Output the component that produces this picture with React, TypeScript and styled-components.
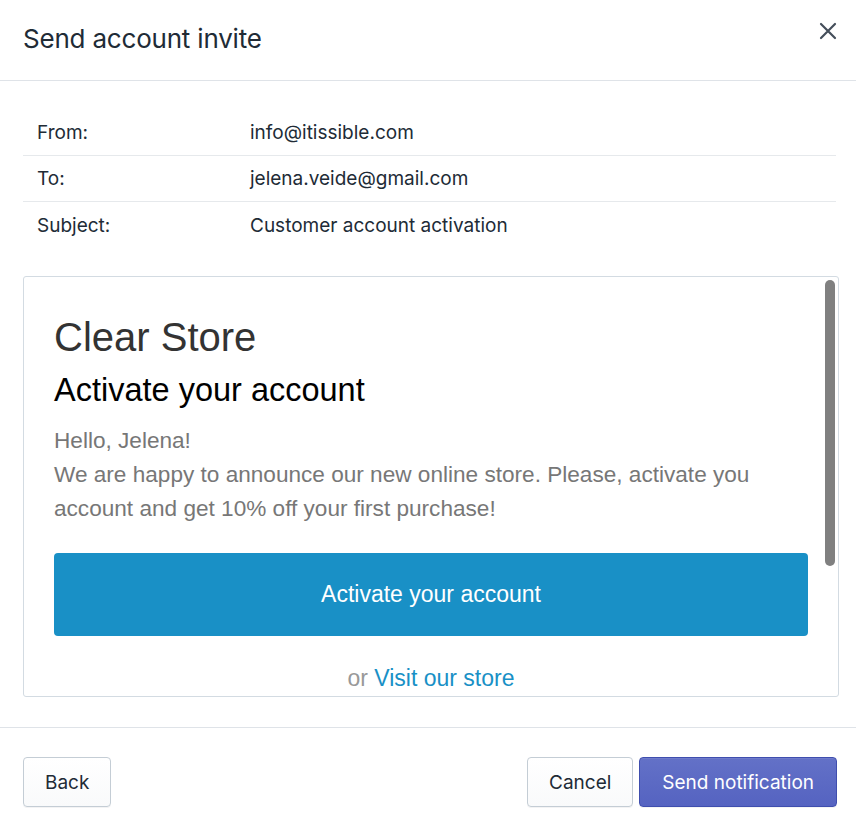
import styled, { createGlobalStyle } from 'styled-components';

const GlobalStyle = createGlobalStyle`
  html, body {
    margin: 0;
    padding: 0;
    background: #ffffff;
  }
  * {
    box-sizing: border-box;
  }
`;

const Modal = styled.div`
  width: 856px;
  height: 828px;
  display: flex;
  flex-direction: column;
  background: #ffffff;
  font-family: Inter, 'Noto Sans', sans-serif;
  color: #212b36;
`;

const Header = styled.header`
  height: 81px;
  flex: none;
  display: flex;
  align-items: center;
  justify-content: space-between;
  padding: 0 16px 4px 23px;
  border-bottom: 1px solid #dfe3e8;
`;

const Title = styled.h2`
  margin: 0;
  font-size: 26px;
  font-weight: 400;
  letter-spacing: -0.2px;
`;

const CloseButton = styled.button`
  width: 24px;
  height: 24px;
  padding: 0;
  border: 0;
  background: none;
  display: flex;
  align-items: center;
  justify-content: center;
  margin-bottom: 14px;
  cursor: pointer;
`;

const Body = styled.div`
  flex: 1;
  display: flex;
  flex-direction: column;
  padding: 29px 17px 30px 23px;
  border-bottom: 1px solid #dfe3e8;
`;

const Fields = styled.div`
  display: flex;
  flex-direction: column;
  margin-right: 3px;
`;

const FieldRow = styled.div<{ $last?: boolean }>`
  height: 46px;
  display: grid;
  grid-template-columns: 213px 1fr;
  align-items: center;
  padding-left: 14px;
  border-bottom: ${(p) => (p.$last ? 'none' : '1px solid #e6e9ec')};
  font-size: 19px;
`;

const FieldLabel = styled.span`
  color: #212b36;
`;

const FieldValue = styled.span`
  color: #212b36;
`;

const Preview = styled.div`
  position: relative;
  margin-top: 28px;
  height: 421px;
  border: 1px solid #d3dbe2;
  border-radius: 3px;
  overflow: hidden;
  font-family: 'Liberation Sans', Arial, sans-serif;
`;

const PreviewContent = styled.div`
  padding: 37px 30px 0 30px;
`;

const StoreName = styled.h1`
  margin: 0;
  font-size: 40px;
  line-height: 46px;
  font-weight: 400;
  color: #333333;
`;

const EmailHeading = styled.h3`
  margin: 10px 0 0;
  font-size: 32.5px;
  line-height: 40px;
  font-weight: 400;
  color: #000000;
`;

const EmailText = styled.p`
  margin: 14px 0 0;
  font-size: 22.6px;
  line-height: 34px;
  color: #777777;
  max-width: 740px;
`;

const ActivateButton = styled.a`
  display: flex;
  align-items: center;
  justify-content: center;
  margin-top: 27px;
  height: 83px;
  border-radius: 4px;
  background: #1990c6;
  color: #ffffff;
  font-size: 23px;
  text-decoration: none;
`;

const AltLine = styled.p`
  margin: 29px 0 0;
  text-align: center;
  font-size: 23px;
  color: #999999;
`;

const StoreLink = styled.a`
  color: #1990c6;
  text-decoration: none;
`;

const ScrollThumb = styled.div`
  position: absolute;
  top: 3px;
  right: 3px;
  width: 10px;
  height: 286px;
  border-radius: 5px;
  background: #808080;
`;

const Footer = styled.footer`
  flex: none;
  height: 100px;
  display: flex;
  align-items: flex-start;
  justify-content: space-between;
  padding: 29px 19px 0 23px;
`;

const Actions = styled.div`
  display: flex;
  gap: 6px;
`;

const Button = styled.button<{ $primary?: boolean }>`
  height: 50px;
  padding: 0 ${(p) => (p.$primary ? '22px' : '21px')};
  border-radius: 4px;
  font-family: Inter, 'Noto Sans', sans-serif;
  font-size: 19px;
  cursor: pointer;
  border: 1px solid ${(p) => (p.$primary ? '#3f4eae' : '#c4cdd5')};
  background: ${(p) =>
    p.$primary
      ? 'linear-gradient(180deg, #6371c7, #5563c1)'
      : 'linear-gradient(180deg, #ffffff, #f9fafb)'};
  color: ${(p) => (p.$primary ? '#ffffff' : '#212b36')};
  box-shadow: ${(p) =>
    p.$primary
      ? 'inset 0 1px 0 0 #6f7bcb, 0 1px 0 0 rgba(22,29,37,0.05)'
      : '0 1px 0 0 rgba(22,29,37,0.05)'};
`;

const fields = [
  { label: 'From:', value: 'info@itissible.com' },
  { label: 'To:', value: 'jelena.veide@gmail.com' },
  { label: 'Subject:', value: 'Customer account activation' },
];

export default function App() {
  return (
    <>
      <GlobalStyle />
      <Modal>
        <Header>
          <Title>Send account invite</Title>
          <CloseButton aria-label="Close">
            <svg width="20" height="20" viewBox="0 0 20 20">
              <path
                d="M3 3 L17 17 M17 3 L3 17"
                stroke="#454f5b"
                strokeWidth="2.2"
                strokeLinecap="round"
              />
            </svg>
          </CloseButton>
        </Header>
        <Body>
          <Fields>
            {fields.map((f, i) => (
              <FieldRow key={f.label} $last={i === fields.length - 1}>
                <FieldLabel>{f.label}</FieldLabel>
                <FieldValue>{f.value}</FieldValue>
              </FieldRow>
            ))}
          </Fields>
          <Preview>
            <PreviewContent>
              <StoreName>Clear Store</StoreName>
              <EmailHeading>Activate your account</EmailHeading>
              <EmailText>
                Hello, Jelena!
                <br />
                We are happy to announce our new online store. Please, activate
                you account and get 10% off your first purchase!
              </EmailText>
              <ActivateButton href="#">Activate your account</ActivateButton>
              <AltLine>
                or <StoreLink href="#">Visit our store</StoreLink>
              </AltLine>
            </PreviewContent>
            <ScrollThumb />
          </Preview>
        </Body>
        <Footer>
          <Button>Back</Button>
          <Actions>
            <Button>Cancel</Button>
            <Button $primary>Send notification</Button>
          </Actions>
        </Footer>
      </Modal>
    </>
  );
}
